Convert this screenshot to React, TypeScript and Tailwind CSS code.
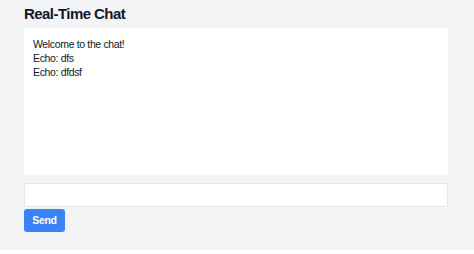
export default function App() {
  const messages = ['Welcome to the chat!', 'Echo: dfs', 'Echo: dfdsf'];

  return (
    <div className="h-[250px] bg-[#f3f4f6] pl-6 pr-[26px] pt-1 font-['Liberation_Sans',Arial,sans-serif] text-[#111827]">
      <h1 className="text-[15px] leading-[20px] font-bold tracking-[-0.55px]">Real-Time Chat</h1>

      {/* Messages */}
      <div className="mt-1 h-[147px] bg-white p-[9px] text-[10.5px] leading-[14px] tracking-[-0.35px]">
        {messages.map((msg, i) => (
          <div key={i}>{msg}</div>
        ))}
      </div>

      {/* Input */}
      <input
        type="text"
        className="mt-2 block h-6 w-full border border-[#e5e7eb] bg-white px-2 text-[10px] outline-none"
      />
      <button className="mt-px h-[23px] w-[41px] rounded-[3px] bg-[#3b82f6] text-[10.5px] font-bold tracking-[-0.3px] text-white">
        Send
      </button>
    </div>
  );
}
